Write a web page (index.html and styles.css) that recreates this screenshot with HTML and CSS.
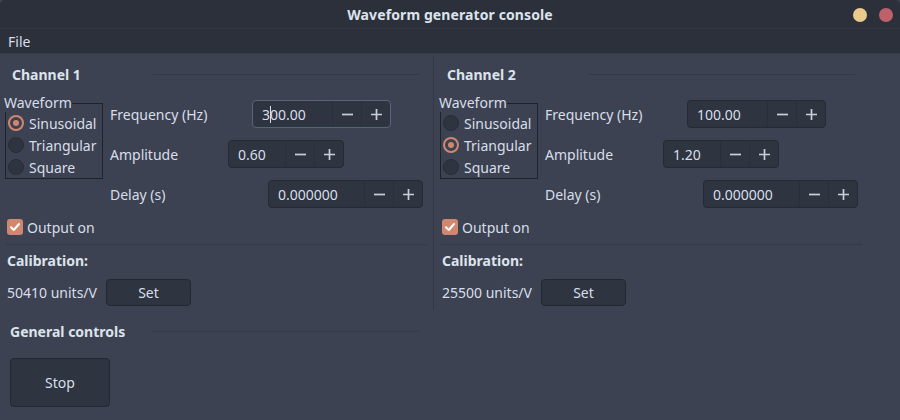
FILE: index.html
```html
<!DOCTYPE html>
<html>
<head>
<meta charset="utf-8">
<link rel="stylesheet" href="styles.css">
</head>
<body>
<div class="window">
  <div class="titlebar">
    <div class="title">Waveform generator console</div>
    <div class="wbtns"><span class="dot dot-min"></span><span class="dot dot-close"></span></div>
  </div>
  <div class="menubar"><span class="menu">File</span></div>
  <div class="content">
    <div class="channels">
      <div class="channel">
        <div class="head"><span class="head-label">Channel 1</span><span class="head-line"></span></div>
        <div class="top">
          <fieldset class="group">
            <legend>Waveform</legend>
            <div class="radio"><span class="rb on"></span>Sinusoidal</div>
            <div class="radio"><span class="rb"></span>Triangular</div>
            <div class="radio"><span class="rb"></span>Square</div>
          </fieldset>
          <div class="params">
            <div class="prow"><span class="plabel">Frequency (Hz)</span>
              <div class="spin focus sp-freq"><span class="val w-freq">3<span class="caret"></span>00.00</span><span class="sbtn"><svg width="11" height="11" viewBox="0 0 11 11"><path d="M0 5.5H11" /></svg></span><span class="sbtn"><svg width="11" height="11" viewBox="0 0 11 11"><path d="M0 5.5H11M5.5 0V11" /></svg></span></div>
            </div>
            <div class="prow"><span class="plabel">Amplitude</span>
              <div class="spin sp-amp"><span class="val w-amp">0.60</span><span class="sbtn"><svg width="11" height="11" viewBox="0 0 11 11"><path d="M0 5.5H11" /></svg></span><span class="sbtn"><svg width="11" height="11" viewBox="0 0 11 11"><path d="M0 5.5H11M5.5 0V11" /></svg></span></div>
            </div>
            <div class="prow"><span class="plabel">Delay (s)</span>
              <div class="spin sp-delay"><span class="val w-delay">0.000000</span><span class="sbtn"><svg width="11" height="11" viewBox="0 0 11 11"><path d="M0 5.5H11" /></svg></span><span class="sbtn"><svg width="11" height="11" viewBox="0 0 11 11"><path d="M0 5.5H11M5.5 0V11" /></svg></span></div>
            </div>
          </div>
        </div>
        <div class="output"><span class="cb"><svg width="16" height="16" viewBox="0 0 16 16"><path d="M4 8.2L6.8 11L12 5" /></svg></span>Output on</div>
        <div class="hsep"></div>
        <div class="cal-title">Calibration:</div>
        <div class="cal-row"><span class="cal-val">50410 units/V</span><button class="btn set">Set</button></div>
      </div>
      <div class="vsep"></div>
      <div class="channel">
        <div class="head"><span class="head-label">Channel 2</span><span class="head-line"></span></div>
        <div class="top">
          <fieldset class="group">
            <legend>Waveform</legend>
            <div class="radio"><span class="rb"></span>Sinusoidal</div>
            <div class="radio"><span class="rb on"></span>Triangular</div>
            <div class="radio"><span class="rb"></span>Square</div>
          </fieldset>
          <div class="params">
            <div class="prow"><span class="plabel">Frequency (Hz)</span>
              <div class="spin sp-freq"><span class="val w-freq">100.00</span><span class="sbtn"><svg width="11" height="11" viewBox="0 0 11 11"><path d="M0 5.5H11" /></svg></span><span class="sbtn"><svg width="11" height="11" viewBox="0 0 11 11"><path d="M0 5.5H11M5.5 0V11" /></svg></span></div>
            </div>
            <div class="prow"><span class="plabel">Amplitude</span>
              <div class="spin sp-amp"><span class="val w-amp">1.20</span><span class="sbtn"><svg width="11" height="11" viewBox="0 0 11 11"><path d="M0 5.5H11" /></svg></span><span class="sbtn"><svg width="11" height="11" viewBox="0 0 11 11"><path d="M0 5.5H11M5.5 0V11" /></svg></span></div>
            </div>
            <div class="prow"><span class="plabel">Delay (s)</span>
              <div class="spin sp-delay"><span class="val w-delay">0.000000</span><span class="sbtn"><svg width="11" height="11" viewBox="0 0 11 11"><path d="M0 5.5H11" /></svg></span><span class="sbtn"><svg width="11" height="11" viewBox="0 0 11 11"><path d="M0 5.5H11M5.5 0V11" /></svg></span></div>
            </div>
          </div>
        </div>
        <div class="output"><span class="cb"><svg width="16" height="16" viewBox="0 0 16 16"><path d="M4 8.2L6.8 11L12 5" /></svg></span>Output on</div>
        <div class="hsep"></div>
        <div class="cal-title">Calibration:</div>
        <div class="cal-row"><span class="cal-val">25500 units/V</span><button class="btn set">Set</button></div>
      </div>
    </div>
    <div class="general">
      <div class="head ghead"><span class="head-label glabel">General controls</span><span class="head-line"></span></div>
      <button class="btn stop">Stop</button>
    </div>
  </div>
</div>
</body>
</html>
```

FILE: styles.css
```css
html, body {
  margin: 0;
  padding: 0;
  background: #3c4251;
}
body {
  font-family: "Noto Sans", "DejaVu Sans", sans-serif;
  font-size: 14px;
  color: #d8dee9;
}
.window {
  width: 900px;
  height: 420px;
  display: flex;
  flex-direction: column;
  background: #3c4251;
  overflow: hidden;
}
.titlebar {
  height: 29px;
  box-sizing: border-box;
  flex: none;
  background: #2b303b;
  border-bottom: 1px solid #313744;
  display: flex;
  align-items: center;
  justify-content: center;
  position: relative;
  border-radius: 5px 5px 0 0;
}
.title {
  font-weight: bold;
  font-size: 14px;
  color: #dde3ec;
  letter-spacing: 0.1px;
}
.wbtns {
  position: absolute;
  right: 7px;
  top: 8px;
  display: flex;
  gap: 12px;
}
.dot {
  width: 14px;
  height: 14px;
  border-radius: 50%;
  display: block;
}
.dot-min { background: #ebcb8b; }
.dot-close { background: #bf616a; }
.menubar {
  height: 25px;
  box-sizing: border-box;
  flex: none;
  background: #2b303b;
  display: flex;
  align-items: center;
  padding-left: 8px;
  border-bottom: 1px solid #353b48;
}
.menu { font-size: 14px; color: #d8dee9; }
.content {
  flex: 1;
  display: flex;
  flex-direction: column;
}
.channels {
  display: flex;
  height: 256px;
}
.channel {
  width: 433px;
  display: flex;
  flex-direction: column;
}
.vsep {
  width: 1px;
  margin-top: 2px;
  margin-right: 1px;
  background: #323845;
}
.head {
  display: flex;
  align-items: center;
  height: 20px;
  margin-top: 10px;
  padding-left: 12px;
}
.head-label {
  width: 141px;
  font-weight: bold;
  font-size: 14px;
  color: #dde3ec;
}
.head-line {
  width: 267px;
  height: 1px;
  background: #333946;
}
.top {
  display: flex;
  margin-top: 16px;
}
.group {
  margin: -6px 0 0 5px;
  padding: 0;
  width: 96px;
  box-sizing: content-box;
  border: 1px solid #1e222a;
  min-width: 0;
  align-self: flex-start;
}
.group legend {
  padding: 0;
  margin-left: -2px;
  line-height: 18px;
  font-size: 14px;
  color: #d8dee9;
}
.radio {
  height: 22px;
  display: flex;
  align-items: center;
  white-space: nowrap;
}
.rb {
  width: 16px;
  height: 16px;
  box-sizing: border-box;
  border-radius: 50%;
  background: #2e3440;
  border: 1px solid #272c36;
  margin: 0 5px 0 2px;
  flex: none;
  position: relative;
}
.rb.on {
  border: 2px solid #d08770;
  background: #3b4252;
}
.rb.on::after {
  content: "";
  position: absolute;
  left: 3px;
  top: 3px;
  width: 6px;
  height: 6px;
  border-radius: 50%;
  background: #d08770;
}
.params {
  margin-left: 7px;
  display: flex;
  flex-direction: column;
  gap: 12px;
}
.prow {
  display: flex;
  align-items: center;
  height: 28px;
}
.plabel {
  width: 118px;
  flex: none;
}
.spin {
  display: flex;
  height: 28px;
  box-sizing: border-box;
  border: 1px solid #252a33;
  border-radius: 4px;
  background: #2e3440;
}
.spin.focus { border-color: #59637a; }
.sp-freq { margin-left: 24px; }
.sp-amp { margin-left: 0; }
.sp-delay { margin-left: 40px; }
.val {
  box-sizing: border-box;
  padding-left: 9px;
  display: flex;
  align-items: center;
  color: #d8dee9;
}
.w-freq { width: 79px; }
.w-amp { width: 56px; }
.w-delay { width: 95px; }
.caret {
  display: inline-block;
  width: 1px;
  height: 17px;
  background: #d8dee9;
  margin-right: -1px;
}
.sbtn {
  width: 29px;
  box-sizing: border-box;
  border-left: 1px solid #2a2f3a;
  display: flex;
  align-items: center;
  justify-content: center;
}
.sbtn svg path {
  stroke: #c9d0dc;
  stroke-width: 1.7;
  fill: none;
}
.output {
  display: flex;
  align-items: center;
  height: 16px;
  margin-top: 11px;
  padding-left: 7px;
}
.cb {
  width: 16px;
  height: 16px;
  border-radius: 3px;
  background: #d08770;
  margin-right: 4px;
  display: block;
}
.cb svg { display: block; }
.cb svg path {
  stroke: #ffffff;
  stroke-width: 2;
  fill: none;
  stroke-linecap: round;
  stroke-linejoin: round;
}
.hsep {
  height: 1px;
  width: 421px;
  margin: 9px 0 0 6px;
  background: #333946;
}
.cal-title {
  font-weight: bold;
  height: 18px;
  line-height: 18px;
  margin-top: 7px;
  padding-left: 7px;
  color: #dde3ec;
}
.cal-row {
  display: flex;
  align-items: center;
  margin-top: 9px;
  padding-left: 7px;
}
.cal-val { width: 99px; }
.btn {
  font-family: "Noto Sans", "DejaVu Sans", sans-serif;
  font-size: 14px;
  color: #d8dee9;
  background: #2e3440;
  border: 1px solid #232730;
  border-radius: 4px;
  padding: 0;
  margin: 0;
}
.set {
  width: 85px;
  height: 27px;
}
.general {
  display: flex;
  flex-direction: column;
}
.ghead {
  margin-top: 11px;
  padding-left: 10px;
}
.glabel { width: 142px; }
.stop {
  width: 100px;
  height: 49px;
  margin: 17px 0 0 10px;
}
```
